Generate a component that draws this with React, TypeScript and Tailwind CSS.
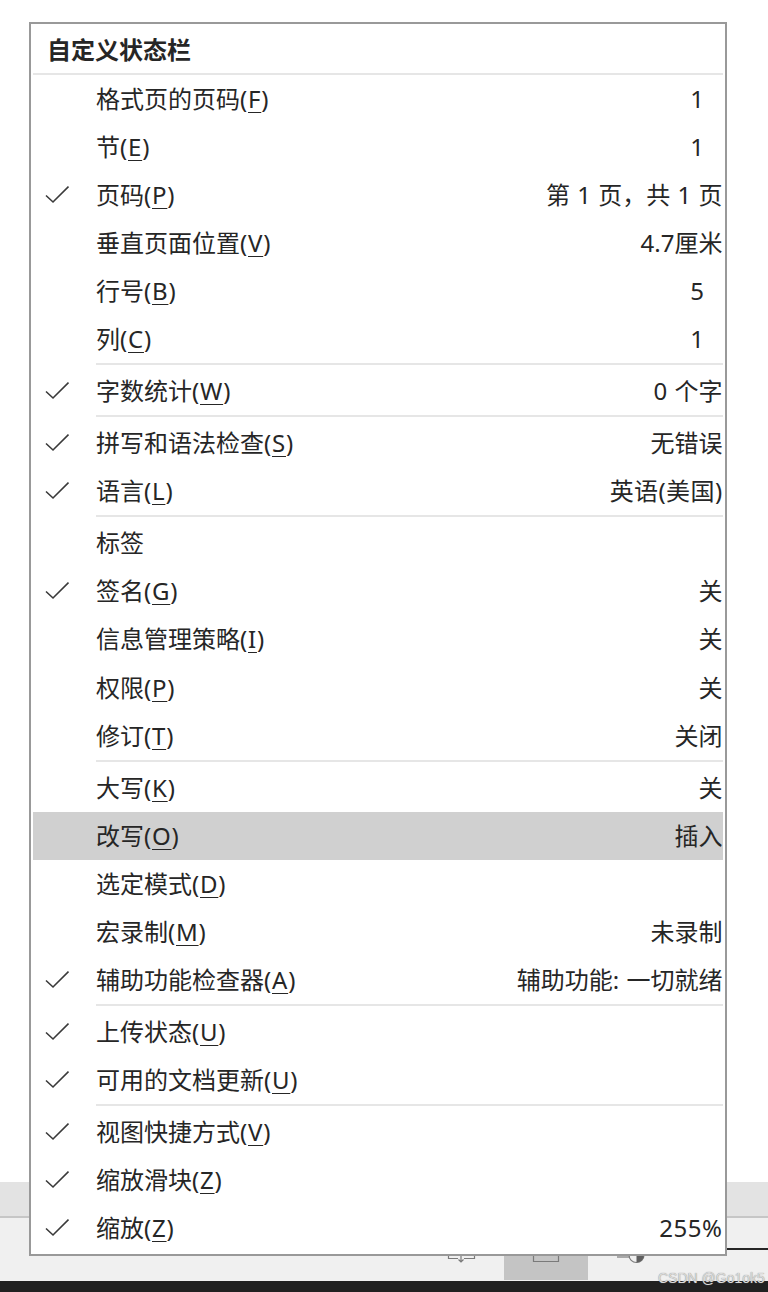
const FONT = "font-['Noto_Sans','Noto_Sans_CJK_SC',sans-serif]";

interface Row {
  label: string;
  key?: string;
  value?: string;
  checked?: boolean;
  indent?: boolean;
  active?: boolean;
  valueClass?: string;
}

const groups: Row[][] = [
  [
    { label: "格式页的页码", key: "F", value: "1", indent: true },
    { label: "节", key: "E", value: "1", indent: true },
    { label: "页码", key: "P", value: "第 1 页，共 1 页", checked: true },
    { label: "垂直页面位置", key: "V", value: "4.7厘米" },
    { label: "行号", key: "B", value: "5", indent: true },
    { label: "列", key: "C", value: "1", indent: true },
  ],
  [{ label: "字数统计", key: "W", value: "0 个字", checked: true }],
  [
    { label: "拼写和语法检查", key: "S", value: "无错误", checked: true },
    { label: "语言", key: "L", value: "英语(美国)", checked: true, valueClass: "tracking-[0.4px]" },
  ],
  [
    { label: "标签" },
    { label: "签名", key: "G", value: "关", checked: true },
    { label: "信息管理策略", key: "I", value: "关" },
    { label: "权限", key: "P", value: "关" },
    { label: "修订", key: "T", value: "关闭" },
  ],
  [
    { label: "大写", key: "K", value: "关" },
    { label: "改写", key: "O", value: "插入", active: true },
    { label: "选定模式", key: "D" },
    { label: "宏录制", key: "M", value: "未录制" },
    { label: "辅助功能检查器", key: "A", value: "辅助功能: 一切就绪", checked: true },
  ],
  [
    { label: "上传状态", key: "U", checked: true },
    { label: "可用的文档更新", key: "U", checked: true },
  ],
  [
    { label: "视图快捷方式", key: "V", checked: true },
    { label: "缩放滑块", key: "Z", checked: true },
    { label: "缩放", key: "Z", value: "255%", checked: true, valueClass: "tracking-[0.5px]" },
  ],
];

function Check() {
  return (
    <svg width="24" height="20" viewBox="0 0 24 20" fill="none" stroke="#3a3a3a" strokeWidth="1.6" className="ml-[12px] w-[24px] shrink-0">
      <path d="M1 10.5 L8 17 L23.5 1.5" />
    </svg>
  );
}

function MenuRow({ row }: { row: Row }) {
  return (
    <div className={`flex h-[48px] items-center text-[24px] leading-[48px] text-[#262626] ${row.active ? "bg-[#d0d0d0]" : ""}`}>
      <div className="flex w-[63px] shrink-0 items-center">{row.checked && <Check />}</div>
      <div className="whitespace-pre">
        {row.label}
        {row.key && (
          <span className="tracking-[0.8px]">
            (<span className="underline decoration-1 underline-offset-[4px]">{row.key}</span>)
          </span>
        )}
      </div>
      {row.value && (
        <div className={`ml-auto whitespace-pre [word-spacing:1px] ${row.indent ? "pr-[19px]" : "pr-[0.5px]"} ${row.valueClass ?? ""}`}>
          {row.value}
        </div>
      )}
    </div>
  );
}

export default function App() {
  return (
    <div className={`relative flex h-[1292px] w-[768px] flex-col overflow-hidden bg-white ${FONT}`}>
      <div className="h-[1182px]" />
      <div className="h-[34px] bg-[#e3e3e3]" />
      <div className="h-[2px] bg-[#c6c6c6]" />
      <div className="relative flex h-[63px] bg-[#f0f0f0]">
        <div className="absolute left-[504px] top-0 h-[62px] w-[84px] bg-[#c4c4c4]" />
        <div className="absolute left-[726px] top-[30px] h-[2px] w-[42px] bg-[#262626]" />
        <svg width="240" height="50" viewBox="0 0 240 50" fill="none" stroke="#7a7a7a" strokeWidth="1.2" className="absolute left-[440px] top-[30px]">
          <path d="M8.5 4 V10.5 H18 M24 10.5 H34.5 V4 M21 6 V14 M18.5 11.5 L21 14 L23.5 11.5" />
          <path d="M93.5 4 V13.5 H118.5 V4" />
          <path d="M177 9 H190" />
          <circle cx="196.5" cy="7" r="7.5" />
          <path d="M196.5 -0.5 A7.5 7.5 0 0 1 196.5 14.5 Z" fill="#5f5f5f" stroke="none" />
        </svg>
        <span className="absolute left-[658px] top-[51px] z-10 font-['Liberation_Sans',sans-serif] text-[14px] leading-[18px] whitespace-pre text-[#dcdcdc] [text-shadow:0_0_1px_#777777]">
          CSDN @Go1ok5
        </span>
      </div>
      <div className="flex-1 bg-[#212121]" />

      <div className="absolute left-[29px] top-[22px] w-[698px] border-2 border-[#999999] bg-white px-[2px] pb-[2px]">
        <div className="ml-[14px] h-[49px] text-[24px] leading-[51px] font-bold text-[#262626]">自定义状态栏</div>
        {groups.map((group, i) => (
          <div key={i}>
            <div className={`h-[2px] bg-[#e6e6e6] ${i === 0 ? "" : "mb-[2px] ml-[63px]"}`} />
            {group.map((row, j) => (
              <div key={row.label} className={i === 3 && j === 3 ? "mt-[1px]" : ""}>
                <MenuRow row={row} />
              </div>
            ))}
          </div>
        ))}
      </div>
    </div>
  );
}
